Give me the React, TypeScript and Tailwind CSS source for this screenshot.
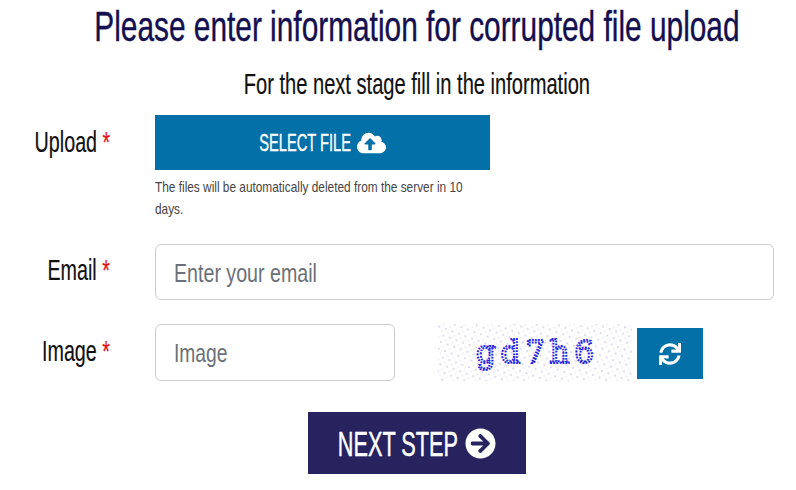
import { FaArrowCircleRight, FaCloudUploadAlt, FaSync } from "react-icons/fa";

const Req = () => <span className="text-[#e0161b]"> *</span>;

const Label = ({ text, className }: { text: string; className: string }) => (
  <div className={`w-[110px] shrink-0 flex justify-end text-[29px] leading-none text-[#111] ${className}`}>
    <span className="inline-block origin-right scale-x-[0.68] whitespace-nowrap [-webkit-text-stroke:0.2px]">
      {text}
      <Req />
    </span>
  </div>
);

const Captcha = () => (
  <svg width="194" height="57" viewBox="0 0 194 57" className="shrink-0">
    <defs>
      <pattern id="dots" width="7" height="7" patternUnits="userSpaceOnUse" patternTransform="rotate(20)">
        <rect width="7" height="7" fill="#fff" />
        <circle cx="2" cy="2" r="1" fill="#d6d0ea" />
        <circle cx="5.5" cy="5.5" r="0.8" fill="#e6e2f2" />
      </pattern>
    </defs>
    <rect width="194" height="57" fill="url(#dots)" />
    <text
      x="38"
      y="39"
      fontFamily="'DejaVu Serif', serif"
      fontSize="31"
      fill="none"
      stroke="#2525dd"
      strokeWidth="2"
      strokeDasharray="1.8 1.2"
      textLength="118"
      lengthAdjust="spacing"
    >
      gd7h6
    </text>
  </svg>
);

export default function App() {
  return (
    <div className="w-[796px] h-[490px] overflow-hidden bg-white flex flex-col font-['Liberation_Sans',sans-serif]">
      <div className="h-[52px] ml-[38px] flex justify-center items-center">
        <h1 className="shrink-0 whitespace-nowrap text-[43px] leading-none text-[#14104f] scale-x-[0.694] [-webkit-text-stroke:0.4px]">
          Please enter information for corrupted file upload
        </h1>
      </div>

      <div className="mt-[18px] h-[28px] ml-[38px] flex justify-center items-center">
        <p className="shrink-0 whitespace-nowrap text-[29px] leading-none text-[#111] scale-x-[0.693] [-webkit-text-stroke:0.2px]">
          For the next stage fill in the information
        </p>
      </div>

      <div className="mt-[17px] flex">
        <Label text="Upload" className="pt-[13px]" />
        <div className="ml-[45px] w-[335px]">
          <button className="w-full h-[55px] bg-[#0470a8] text-white flex items-center justify-center gap-[5px]">
            <span className="w-[92px] flex justify-center">
              <span className="shrink-0 whitespace-nowrap text-[24px] leading-none scale-x-[0.61] [-webkit-text-stroke:0.4px]">SELECT FILE</span>
            </span>
            <FaCloudUploadAlt className="w-[29px] h-[24px]" />
          </button>
          <p className="mt-[6px] w-[410px] origin-left scale-x-[0.79] text-[15px] leading-[22px] text-[#444]">
            The files will be automatically deleted from the server in 10 days.
          </p>
        </div>
      </div>

      <div className="mt-[24px] flex items-center">
        <Label text="Email" className="pb-[3px]" />
        <div className="ml-[45px] w-[619px] h-[56px] border border-[#ccc] rounded-[6px] flex items-center pl-[18px] pt-[2px] overflow-hidden">
          <input
            placeholder="Enter your email"
            className="w-[800px] shrink-0 origin-left scale-x-[0.755] text-[26px] outline-none placeholder:text-[#6b7178]"
          />
        </div>
      </div>

      <div className="mt-[24px] flex items-start">
        <Label text="Image" className="pt-[13px]" />
        <div className="ml-[45px] w-[240px] h-[57px] border border-[#ccc] rounded-[6px] flex items-center pl-[18px] pt-[2px] overflow-hidden">
          <input
            placeholder="Image"
            className="w-[280px] shrink-0 origin-left scale-x-[0.74] text-[26px] outline-none placeholder:text-[#6b7178]"
          />
        </div>
        <div className="ml-[43px]">
          <Captcha />
        </div>
        <button className="ml-[5px] mt-[4px] w-[66px] h-[51px] bg-[#0470a8] text-white flex items-center justify-center">
          <FaSync className="w-[22px] h-[22px]" />
        </button>
      </div>

      <div className="mt-[31px] ml-[308px]">
        <button className="w-[218px] h-[62px] bg-[#26235f] text-white flex items-center justify-center gap-[7px]">
          <span className="w-[120px] flex justify-center">
            <span className="shrink-0 whitespace-nowrap text-[35px] leading-none scale-x-[0.62] [-webkit-text-stroke:0.5px]">NEXT STEP</span>
          </span>
          <FaArrowCircleRight className="w-[31px] h-[31px]" />
        </button>
      </div>
    </div>
  );
}
